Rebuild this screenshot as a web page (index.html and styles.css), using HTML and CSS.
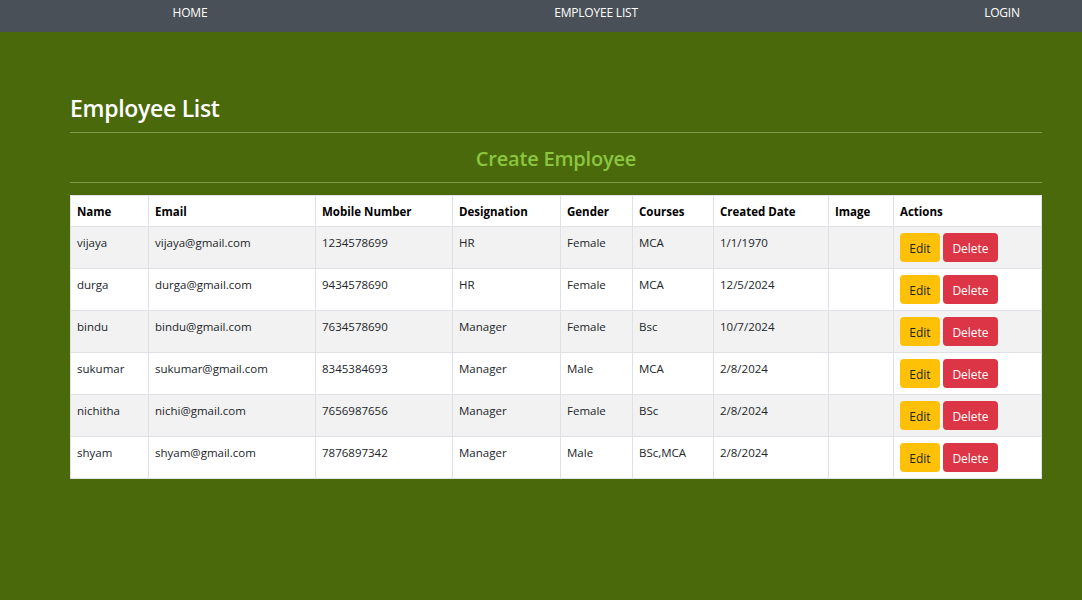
FILE: index.html
```html
<!DOCTYPE html>
<html>
<head>
<meta charset="utf-8">
<link rel="stylesheet" href="styles.css">
</head>
<body>
<header class="topbar">
<nav class="topnav">
  <a class="nav-item" href="#">HOME</a>
  <a class="nav-item" href="#">EMPLOYEE LIST</a>
  <a class="nav-item" href="#">LOGIN</a>
</nav>
</header>
<main class="content">
  <h3 class="title">Employee List</h3>
  <hr class="rule">
  <h4 class="create">Create Employee</h4>
  <hr class="rule">
  <table class="emp-table">
    <colgroup>
      <col class="c1"><col class="c2"><col class="c3"><col class="c4"><col class="c5"><col class="c6"><col class="c7"><col class="c8"><col class="c9">
    </colgroup>
    <thead>
      <tr><th>Name</th><th>Email</th><th>Mobile Number</th><th>Designation</th><th>Gender</th><th>Courses</th><th>Created Date</th><th>Image</th><th>Actions</th></tr>
    </thead>
    <tbody>
      <tr><td>vijaya</td><td>vijaya@gmail.com</td><td>1234578699</td><td>HR</td><td>Female</td><td>MCA</td><td>1/1/1970</td><td></td><td class="actions"><button class="btn edit">Edit</button> <button class="btn del">Delete</button></td></tr>
      <tr><td>durga</td><td>durga@gmail.com</td><td>9434578690</td><td>HR</td><td>Female</td><td>MCA</td><td>12/5/2024</td><td></td><td class="actions"><button class="btn edit">Edit</button> <button class="btn del">Delete</button></td></tr>
      <tr><td>bindu</td><td>bindu@gmail.com</td><td>7634578690</td><td>Manager</td><td>Female</td><td>Bsc</td><td>10/7/2024</td><td></td><td class="actions"><button class="btn edit">Edit</button> <button class="btn del">Delete</button></td></tr>
      <tr><td>sukumar</td><td>sukumar@gmail.com</td><td>8345384693</td><td>Manager</td><td>Male</td><td>MCA</td><td>2/8/2024</td><td></td><td class="actions"><button class="btn edit">Edit</button> <button class="btn del">Delete</button></td></tr>
      <tr><td>nichitha</td><td>nichi@gmail.com</td><td>7656987656</td><td>Manager</td><td>Female</td><td>BSc</td><td>2/8/2024</td><td></td><td class="actions"><button class="btn edit">Edit</button> <button class="btn del">Delete</button></td></tr>
      <tr><td>shyam</td><td>shyam@gmail.com</td><td>7876897342</td><td>Manager</td><td>Male</td><td>BSc,MCA</td><td>2/8/2024</td><td></td><td class="actions"><button class="btn edit">Edit</button> <button class="btn del">Delete</button></td></tr>
    </tbody>
  </table>
</main>
</body>
</html>
```
FILE: styles.css
```css
* { box-sizing: border-box; }
html, body { margin: 0; padding: 0; }
body {
  background: #4a690b;
  font-family: "Open Sans", "Noto Sans", sans-serif;
  color: #212529;
  width: 1082px;
  height: 600px;
  overflow: hidden;
}
.topbar {
  background: #495057;
  height: 32px;
  overflow: hidden;
}
.topnav {
  display: flex;
  margin-left: -13px;
}
.nav-item {
  width: 406px;
  flex: none;
  text-align: center;
  color: #fff;
  text-decoration: none;
  font-size: 12px;
  line-height: 25px;
  letter-spacing: -0.2px;
}
.content {
  padding: 58px 40px 0 70px;
}
.title {
  margin: 0;
  color: #fff;
  font-size: 23px;
  font-weight: 600;
  line-height: 36px;
  letter-spacing: -0.3px;
}
.rule {
  border: 0;
  border-top: 1px solid #7e9a4a;
  margin: 6px 0 0 0;
  height: 0;
}
.create {
  margin: 0;
  text-align: center;
  color: #8cc63f;
  font-size: 20px;
  font-weight: 600;
  line-height: 30px;
  padding: 11px 0 2px;
  letter-spacing: -0.2px;
}
.emp-table {
  width: 971px;
  border-collapse: collapse;
  background: #fff;
  table-layout: fixed;
  font-size: 11.5px;
  margin-top: 12px;
}
.c1 { width: 78px; } .c2 { width: 167px; } .c3 { width: 137px; } .c4 { width: 108px; }
.c5 { width: 72px; } .c6 { width: 81px; } .c7 { width: 115px; } .c8 { width: 65px; } .c9 { width: 148px; }
.emp-table th, .emp-table td {
  border: 1px solid #dee2e6;
  text-align: left;
  vertical-align: top;
  padding: 7px 6px 5px;
  white-space: nowrap;
}
.emp-table th {
  font-weight: 700;
  height: 31px;
  line-height: 18px;
  color: #000;
}
.emp-table td {
  height: 42px;
  line-height: 18px;
}
.emp-table td.actions { padding-top: 6px; }
.emp-table tbody tr:nth-child(odd) td { background: #f2f2f2; }
.actions { font-size: 0; }
.btn {
  font-family: inherit;
  font-size: 12px;
  border: 0;
  border-radius: 4px;
  height: 29px;
  padding: 0 8px;
  vertical-align: top;
  line-height: 31px;
  cursor: pointer;
}
.edit { background: #ffc107; color: #212529; width: 40px; margin-right: 3px; }
.del { background: #dc3545; color: #fff; width: 55px; }
```
